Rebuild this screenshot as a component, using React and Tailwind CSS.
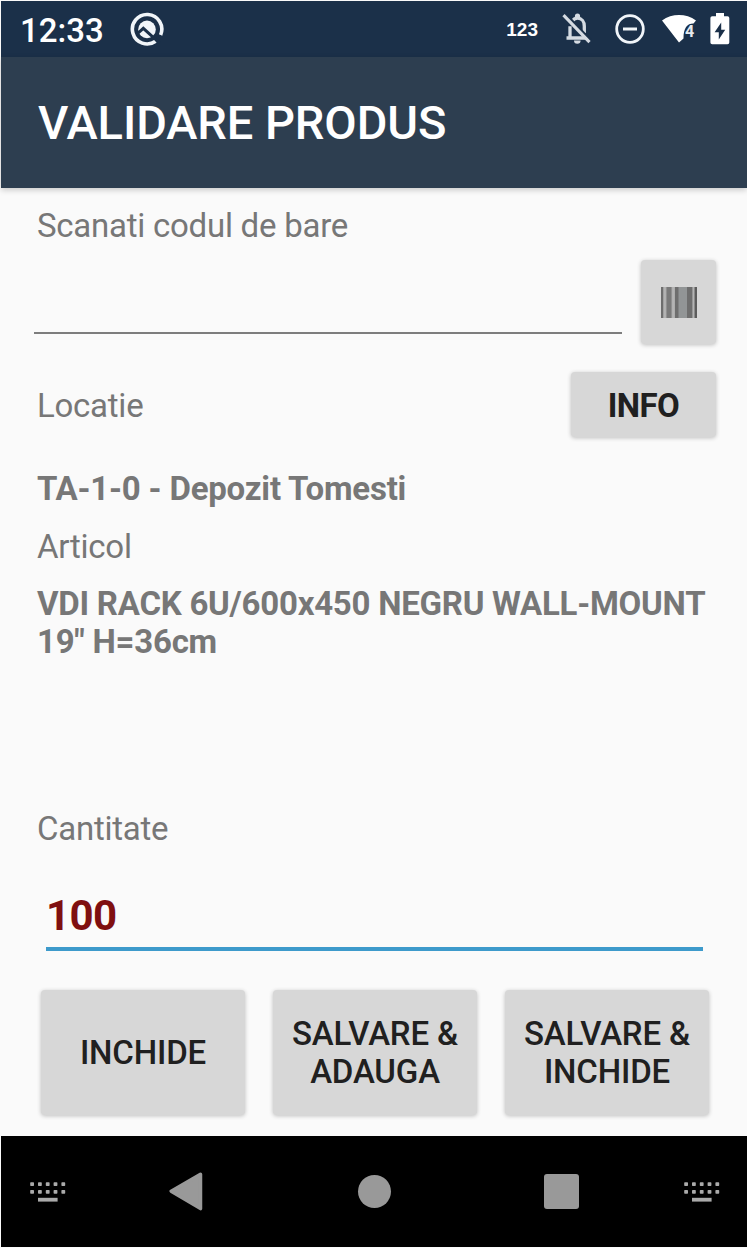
import React, { useState } from 'react'

const ACTIONS = [
  { key: 'close', lines: ['INCHIDE'] },
  { key: 'save-add', lines: ['SALVARE &', 'ADAUGA'] },
  { key: 'save-close', lines: ['SALVARE &', 'INCHIDE'] },
]

function DebugIcon() {
  return (
    <svg className="w-9 h-9 ml-[25px]" viewBox="0 0 36 36" fill="none">
      <path d="M26.6 30.2A14.7 14.7 0 1 1 31.6 24" stroke="#f1f5f9" strokeWidth="3.6" />
      <circle cx="18" cy="18.4" r="8.8" fill="#f1f5f9" />
      <path d="M7.5 23.5l6.8-6.2L30.5 32" stroke="#1b3049" strokeWidth="3" />
    </svg>
  )
}

function BellOffIcon() {
  return (
    <svg className="w-[30px] h-[32px]" viewBox="0 0 30 32" fill="none">
      <path d="M4.5 25h21M8 24V13.2M10 8.8C11.3 6.3 13 5.2 15.5 5.2c4.2 0 6.8 3.4 6.8 8V20" stroke="#d5dbe2" strokeWidth="3.3" />
      <path d="M12.9 5V3a2.6 2.6 0 0 1 5.2 0v2zM12 27.4h6.6a3.3 3.3 0 0 1-6.6 0z" fill="#d5dbe2" />
      <path d="M3.8 1.2l25.5 26.5" stroke="#1b3049" strokeWidth="2.4" />
      <path d="M1.5 2.2l26 27" stroke="#d5dbe2" strokeWidth="3.1" />
    </svg>
  )
}

function DndIcon() {
  return (
    <svg className="w-[30px] h-[30px]" viewBox="0 0 30 30" fill="none" stroke="#f1f5f9">
      <circle cx="15" cy="15" r="13.3" strokeWidth="2.8" />
      <path d="M8 15h14" strokeWidth="3" />
    </svg>
  )
}

function WifiIcon() {
  return (
    <svg className="w-[36px] h-[30px]" viewBox="0 0 36 30">
      <path d="M1 6.4C11 -0.9 25 -0.9 35 6.4L32.5 9.5C26 9.5 22.5 14 22.5 24.5L18 28.5z" fill="#fff" />
      <text x="24" y="23.4" fontFamily="Roboto, sans-serif" fontWeight="700" fontSize="17" textLength="9" lengthAdjust="spacingAndGlyphs" fill="#e5e9ee">4</text>
    </svg>
  )
}

function BatteryIcon() {
  return (
    <svg className="w-5 h-8" viewBox="0 0 20 32">
      <path d="M6 0h8v3.3h3.5a1.8 1.8 0 0 1 1.8 1.8V29.5a1.8 1.8 0 0 1-1.8 1.8H2.2a1.8 1.8 0 0 1-1.8-1.8V5.1a1.8 1.8 0 0 1 1.8-1.8H6z" fill="#fff" />
      <path d="M11.2 9.5L4.6 19.2h4.2v7.3l6.4-9.8h-4z" fill="#1b3049" />
    </svg>
  )
}

function BarcodeIcon() {
  return (
    <svg className="w-9 h-[31px]" viewBox="0 0 36 31">
      <rect width="36" height="31" fill="#a9a9a9" />
      <rect x="14" width="12" height="31" fill="#929596" />
      <g fill="#6e6e6e">
        <rect width="2.2" height="31" />
        <rect x="5.5" width="5" height="31" fill="#7a7a7a" />
        <rect x="14" width="3.5" height="31" />
        <rect x="26" width="5.5" height="31" />
        <rect x="33.4" width="2.6" height="31" fill="#5c5c5c" />
      </g>
      <rect x="2.8" width="2" height="31" fill="#b4b4b4" />
      <rect x="11.2" width="2.2" height="31" fill="#b4b4b4" />
      <rect x="31.7" width="1.6" height="31" fill="#b4b4b4" />
    </svg>
  )
}

function KeyboardIcon() {
  return (
    <svg className="w-9 h-5" viewBox="0 0 36 20" fill="#aaa">
      {[0, 1, 2, 3, 4].map(i => (
        <React.Fragment key={i}>
          <rect x={i * 7.8 + 0.2} y="0.2" width="3.8" height="3.8" rx="0.7" />
          <rect x={i * 7.8 + 0.2} y="8" width="3.8" height="3.8" rx="0.7" />
        </React.Fragment>
      ))}
      <rect x="8" y="15.8" width="19.6" height="3.8" />
    </svg>
  )
}

function StatusBar() {
  return (
    <div className="h-14 shrink-0 flex items-center bg-[#1b3049] pl-[19px] pr-[17px] text-white">
      <span className="text-[33px] leading-none font-medium tracking-normal pt-0.5">12:33</span>
      <DebugIcon />
      <div className="ml-auto flex items-center">
        <span className="font-['Liberation_Sans',sans-serif] text-[19px] leading-none font-bold tracking-normal mr-[24px]">123</span>
        <BellOffIcon />
        <div className="w-[23px]" />
        <DndIcon />
        <div className="w-[16px]" />
        <WifiIcon />
        <div className="w-[13px]" />
        <BatteryIcon />
      </div>
    </div>
  )
}

function GreyButton({ className, children, onClick }) {
  return (
    <button onClick={onClick} className={`flex flex-col items-center justify-center rounded-[4px] bg-[#d7d7d7] text-[#202020] text-[33px] leading-[38px] shadow-[0_1px_4px_rgba(0,0,0,0.24)] ${className}`}>
      {children}
    </button>
  )
}

function NavBar() {
  return (
    <div className="h-[111px] shrink-0 flex items-center bg-black pl-[29px] pr-[27px]">
      <KeyboardIcon />
      <svg className="w-[34px] h-[39px] ml-[103px]" viewBox="0 0 34 39">
        <path d="M31.5 2.2L2.2 19.2 31.5 36.6z" fill="#999" stroke="#999" strokeWidth="3.5" strokeLinejoin="round" />
      </svg>
      <div className="w-[33px] h-[33px] rounded-full bg-[#999] ml-[155px]" />
      <div className="w-[35px] h-[35px] rounded-[3px] bg-[#999] ml-[153px]" />
      <div className="ml-auto"><KeyboardIcon /></div>
    </div>
  )
}

export default function App() {
  const [code, setCode] = useState('')
  const [qty, setQty] = useState('100')

  return (
    <div className="w-[747px] h-[1248px] flex flex-col pl-px py-px bg-[#fafafa] font-['Roboto',sans-serif] text-[33px] leading-[38px] tracking-[-0.25px] text-[#777] overflow-hidden">
      <StatusBar />
      <header className="h-[131px] shrink-0 z-10 flex items-center bg-[#2d3e50] pl-[37px] text-white shadow-[0_2px_6px_rgba(0,0,0,0.2)]">
        <h1 className="text-[47px] leading-none font-medium tracking-[-0.08px]">VALIDARE PRODUS</h1>
      </header>

      <main className="grow flex flex-col px-9 pt-[19px]">
        <label>Scanati codul de bare</label>
        <div className="flex items-start justify-between mt-[15px] -ml-[3px] -mr-[5px]">
          <input value={code} onChange={e => setCode(e.target.value)} className="w-[588px] h-[74px] border-b-2 border-[#7d7d7d] outline-none" />
          <GreyButton className="w-[75px] h-[84px]"><BarcodeIcon /></GreyButton>
        </div>

        <div className="flex items-center justify-between mt-7 -mr-[5px] h-[65px]">
          <span className="pt-0.5">Locatie</span>
          <GreyButton className="w-[145px] h-[65px] pt-0.5 font-bold tracking-[-0.6px]">INFO</GreyButton>
        </div>
        <div className="mt-[33px] font-bold tracking-[-0.2px]">TA-1-0 - Depozit Tomesti</div>

        <div className="mt-5">Articol</div>
        <div className="mt-[19px] font-bold leading-[37.5px] whitespace-nowrap">
          VDI RACK 6U/600x450 NEGRU WALL-MOUNT<br />19" H=36cm
        </div>

        <label className="mt-[150px]">Cantitate</label>
        <input value={qty} onChange={e => setQty(e.target.value)} className="w-[657px] h-[70px] mt-[33px] ml-[9px] pt-0.5 border-b-4 border-[#3d9acb] text-[42px] leading-[48px] tracking-[-0.6px] font-bold text-[#7f0f10] outline-none" />

        <div className="flex gap-7 mt-[39px] ml-1">
          {ACTIONS.map(a => (
            <GreyButton key={a.key} className="w-[204px] h-[125px] shrink-0 font-medium tracking-[-0.15px]">
              {a.lines.map(l => <span key={l}>{l}</span>)}
            </GreyButton>
          ))}
        </div>
      </main>

      <NavBar />
    </div>
  )
}
